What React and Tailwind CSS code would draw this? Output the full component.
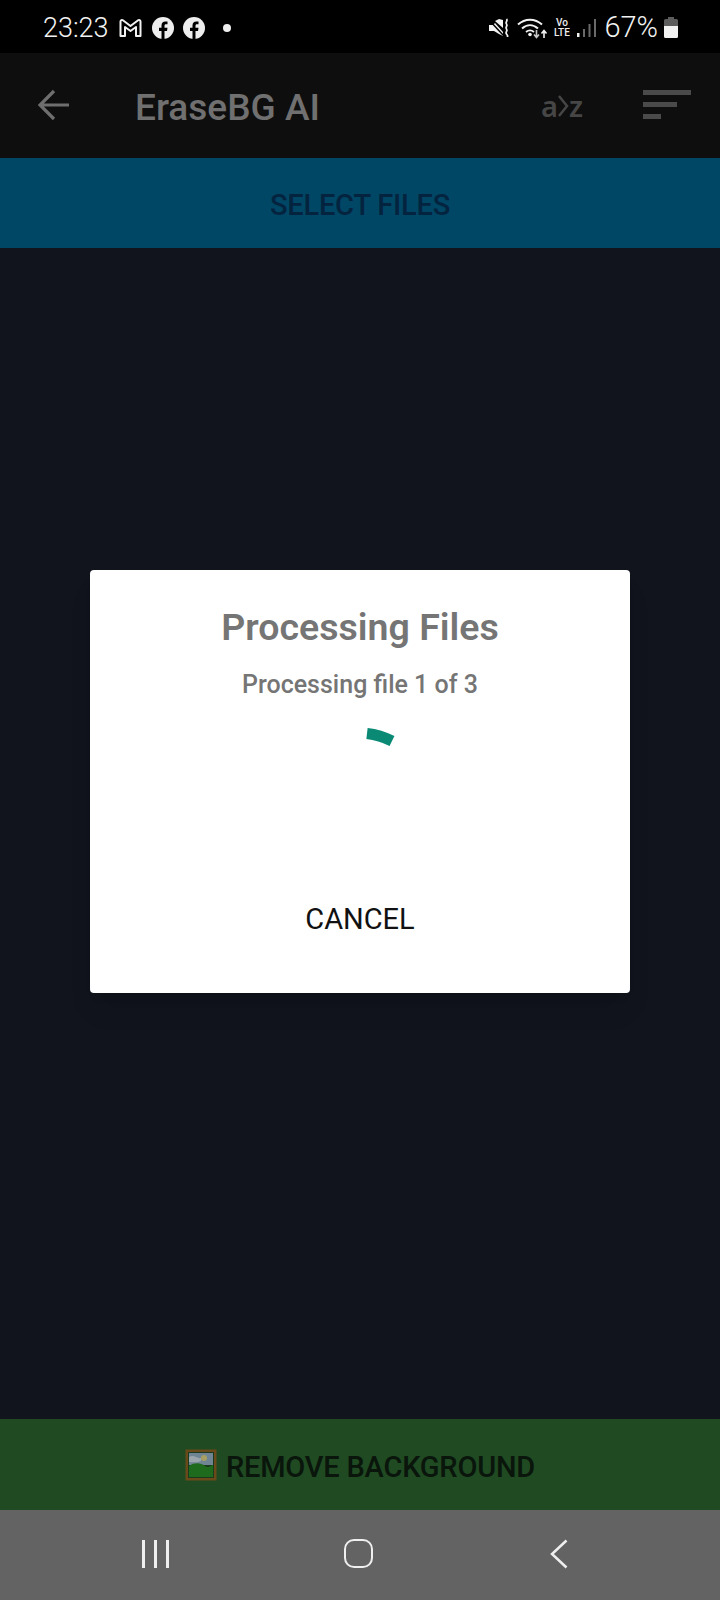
import React from "react";

const StatusLeft = () => (
  <div className="flex items-center">
    <span className="text-[27px] leading-none font-light text-[#f2f2f2] pt-[1px]">23:23</span>
    <svg width="25" height="20" viewBox="0 0 24 20" className="ml-[9px]" fill="none">
      <path d="M2 18V3.500a1.500 1.500 0 0 1 2.400-1.200L12 8l7.600-5.700A1.500 1.500 0 0 1 22 3.500V18h-4.500V9L12 13 6.500 9v9z" stroke="#f2f2f2" strokeWidth="2" strokeLinejoin="round" />
    </svg>
    {[0, 1].map((i) => (
      <svg key={i} width="22" height="22" viewBox="0 0 22 22" className="ml-[9px]">
        <circle cx="11" cy="11" r="11" fill="#eeeeee" />
        <path d="M9.500 22v-8H7v-3.200h2.500V8.400c0-2.600 1.500-4 3.800-4 .9 0 1.800.1 2.200.2v2.700h-1.400c-1.300 0-1.600.7-1.600 1.500v2h3l-.5 3.200h-2.500v8z" fill="#000" />
      </svg>
    ))}
    <div className="ml-[18px] w-2 h-2 rounded-full bg-[#eeeeee]" />
  </div>
);

const StatusRight = () => (
  <div className="flex items-center">
    {/* muted with vibrate */}
    <svg width="22" height="20" viewBox="0 0 22 20" fill="none">
      <path d="M1 7h4l2-2 8 9v4l-4-2-5-3H1z" fill="#f2f2f2" />
      <path d="M7 3l4-2 4 1v8z" fill="#f2f2f2" />
      <path d="M0.500 1.500l15 16" stroke="#000" strokeWidth="1.500" />
      <path d="M18.500 1c2 2-1.800 3 0 5s-1.800 3 0 5-1.800 3 0 5 1 2 1 3" stroke="#f2f2f2" strokeWidth="1.800" />
    </svg>
    {/* wifi */}
    <svg width="31" height="22" viewBox="0 0 31 22" fill="none" className="ml-[7px]">
      <path d="M1 7.500C8 1 18 1 25 7.500" stroke="#f2f2f2" strokeWidth="2" />
      <path d="M5 11.500c5-4.500 11-4.500 16 0" stroke="#f2f2f2" strokeWidth="2" />
      <path d="M9 15c3-2.500 5-2.500 8 0" stroke="#f2f2f2" strokeWidth="1.800" />
      <circle cx="13" cy="17.500" r="1.800" fill="#f2f2f2" />
      <path d="M19.500 13v7m-2.500-2.500l2.500 3 2.500-3" stroke="#c8c8c8" strokeWidth="1.600" />
      <path d="M27 21v-7m-2.500 2.500l2.500-3 2.500 3" stroke="#f2f2f2" strokeWidth="1.600" />
    </svg>
    <div className="ml-[5px] w-[17px] flex flex-col items-center text-[#ededed] text-[10px] leading-[10px] font-medium">
      <span>Vo</span>
      <span>LTE</span>
    </div>
    <svg width="20" height="20" viewBox="0 0 20 20" className="ml-[7px]">
      <rect x="0" y="15" width="2.500" height="4" fill="#f2f2f2" />
      <rect x="6" y="11" width="2" height="8" fill="#6a6a6a" />
      <rect x="11.500" y="6" width="2" height="13" fill="#6a6a6a" />
      <rect x="17" y="1" width="2" height="18" fill="#6a6a6a" />
    </svg>
    <span className="ml-[7px] text-[29px] leading-none font-light text-[#f2f2f2]">67%</span>
    <svg width="14" height="21" viewBox="0 0 14 21" className="ml-[6px]">
      <path d="M4 0h6v2h2.500A1.500 1.500 0 0 1 14 3.500V10H0V3.500A1.500 1.500 0 0 1 1.500 2H4z" fill="#5c5c5c" />
      <path d="M0 9h14v10.500a1.500 1.500 0 0 1-1.500 1.500h-11A1.500 1.500 0 0 1 0 19.500z" fill="#f2f2f2" />
    </svg>
  </div>
);

const PictureIcon = () => (
  <svg width="32" height="32" viewBox="0 0 32 32">
    <rect x="0.500" y="0.500" width="31" height="31" fill="#6b4a1a" />
    <rect x="3" y="3" width="26" height="26" fill="#1c3a1e" />
    <rect x="4" y="4" width="24" height="12" fill="#6f8593" />
    <circle cx="19" cy="9" r="3" fill="#a8a060" />
    <path d="M4 8c5-3 8 2 12 1v3c-4 2-8 1-12 1z" fill="#9aa5ac" />
    <path d="M4 17c6-4 12-3 16 0s6-1 8-1v12H4z" fill="#1f6b1d" />
  </svg>
);

export default function App() {
  return (
    <div className="relative w-[720px] h-[1600px] flex flex-col bg-[#11141d] font-['Roboto',sans-serif]">
      <div className="h-[53px] bg-black flex items-center justify-between pl-[43px] pr-[42px] pt-[2px]">
        <StatusLeft />
        <StatusRight />
      </div>

      <div className="h-[105px] bg-[#0e0e0e] flex items-center pl-[38px] pr-[29px]">
        <svg width="32" height="32" viewBox="0 0 32 32" fill="none" stroke="#6e6e6e" strokeWidth="3.200" className="-mt-[2px]">
          <path d="M31 16H2M16 2L2 16l14 14" />
        </svg>
        <h1 className="ml-[65px] pt-[3px] text-[37px] leading-none font-medium text-[#707070]">EraseBG AI</h1>
        <span className="ml-auto flex items-center text-[29px] leading-none font-semibold text-[#464646] font-['Noto_Sans',sans-serif]">
          a<svg width="11" height="22" viewBox="0 0 11 22" fill="none" stroke="#464646" strokeWidth="2.500"><path d="M1 1l8 10-8 10" /></svg>z
        </span>
        <div className="ml-[60px] w-[48px] flex flex-col gap-[7px] -mt-[2px]">
          <div className="h-[5px] w-[48px] bg-[#4a4a4a]" />
          <div className="h-[5px] w-[34px] bg-[#4a4a4a]" />
          <div className="h-[5px] w-[18px] bg-[#4a4a4a]" />
        </div>
      </div>

      <div className="h-[90px] bg-[#004766] flex items-center justify-center pt-[6px]">
        <span className="text-[29px] font-medium text-[#04233f] tracking-[-0.2px]">SELECT FILES</span>
      </div>

      <div className="flex-1" />

      <div className="h-[91px] bg-[#1f4a22] flex items-center justify-center">
        <PictureIcon />
        <span className="ml-[9px] text-[29px] font-medium text-[#0a150c] tracking-[-0.2px] pt-[6px]">REMOVE BACKGROUND</span>
      </div>

      <div className="h-[90px] bg-[#636363] flex items-center pb-[3px]">
        <div className="ml-[142px] flex gap-[9.500px]">
          <div className="w-[2.500px] h-[28px] bg-[#efefef]" />
          <div className="w-[2.500px] h-[28px] bg-[#efefef]" />
          <div className="w-[2.500px] h-[28px] bg-[#efefef]" />
        </div>
        <div className="ml-[175px] w-[29px] h-[29px] rounded-[10px] border-[2.500px] border-[#efefef]" />
        <svg width="18" height="30" viewBox="0 0 18 30" fill="none" stroke="#efefef" strokeWidth="2.500" className="ml-[177px]">
          <path d="M16.500 1.500L2 15l14.500 13.500" />
        </svg>
      </div>

      {/* dialog sits over the page */}
      <div className="absolute inset-0 flex justify-center items-start pt-[570px]">
        <div className="w-[540px] h-[423px] bg-white rounded-[4px] shadow-xl flex flex-col items-center">
          <h2 className="mt-[32px] text-[37.500px] leading-[50px] font-semibold text-[#757575]">Processing Files</h2>
          <p className="mt-[18px] text-[25px] leading-[30px] font-medium text-[#757575]">Processing file 1 of 3</p>
          <svg width="40" height="24" viewBox="0 0 40 24" fill="none" className="mt-[27px] ml-[39px]">
            <path d="M7 6.500Q20 8 32 14" stroke="#0a8a75" strokeWidth="11" />
          </svg>
          <button className="mt-[152px] text-[29px] leading-[32px] text-[#111111]">CANCEL</button>
        </div>
      </div>
    </div>
  );
}
